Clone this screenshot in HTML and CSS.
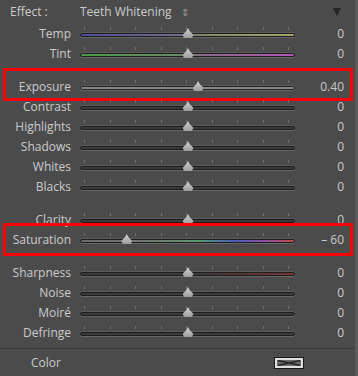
FILE: index.html
```html
<!DOCTYPE html>
<html lang="en">
<head>
  <meta charset="UTF-8">
  <meta name="viewport" content="width=device-width, initial-scale=1.0">
  <title>Local Adjustments</title>
  <link rel="stylesheet" href="styles.css">
</head>
<body>
  <div class="panel">
    <div class="header">
      <span class="effect-label">Effect :</span>
      <span class="effect-name">Teeth Whitening</span>
      <span class="updown">&#8661;</span>
      <span class="collapse"></span>
    </div>

    <div class="group">
      <div class="row">
        <span class="label">Temp</span>
        <div class="slider">
          <div class="ticks"><i></i><i></i><i></i><i></i><i></i><i></i><i></i><i></i><i></i></div>
          <div class="track temp"></div>
          <span class="thumb" style="left: 50%"></span>
        </div>
        <span class="value">0</span>
      </div>
      <div class="row">
        <span class="label">Tint</span>
        <div class="slider">
          <div class="ticks"><i></i><i></i><i></i><i></i><i></i><i></i><i></i><i></i><i></i></div>
          <div class="track tint"></div>
          <span class="thumb" style="left: 50%"></span>
        </div>
        <span class="value">0</span>
      </div>
    </div>

    <div class="group">
      <div class="row hl hl-exposure">
        <span class="label">Exposure</span>
        <div class="slider">
          <div class="ticks"><i></i><i></i><i></i><i></i><i></i><i></i><i></i><i></i><i></i></div>
          <div class="track light"></div>
          <span class="thumb" style="left: 54.7%"></span>
        </div>
        <span class="value">0.40</span>
      </div>
      <div class="row">
        <span class="label">Contrast</span>
        <div class="slider">
          <div class="ticks"><i></i><i></i><i></i><i></i><i></i><i></i><i></i><i></i><i></i></div>
          <div class="track"></div>
          <span class="thumb" style="left: 50%"></span>
        </div>
        <span class="value">0</span>
      </div>
      <div class="row">
        <span class="label">Highlights</span>
        <div class="slider">
          <div class="ticks"><i></i><i></i><i></i><i></i><i></i><i></i><i></i><i></i><i></i></div>
          <div class="track"></div>
          <span class="thumb" style="left: 50%"></span>
        </div>
        <span class="value">0</span>
      </div>
      <div class="row">
        <span class="label">Shadows</span>
        <div class="slider">
          <div class="ticks"><i></i><i></i><i></i><i></i><i></i><i></i><i></i><i></i><i></i></div>
          <div class="track"></div>
          <span class="thumb" style="left: 50%"></span>
        </div>
        <span class="value">0</span>
      </div>
      <div class="row">
        <span class="label">Whites</span>
        <div class="slider">
          <div class="ticks"><i></i><i></i><i></i><i></i><i></i><i></i><i></i><i></i><i></i></div>
          <div class="track"></div>
          <span class="thumb" style="left: 50%"></span>
        </div>
        <span class="value">0</span>
      </div>
      <div class="row">
        <span class="label">Blacks</span>
        <div class="slider">
          <div class="ticks"><i></i><i></i><i></i><i></i><i></i><i></i><i></i><i></i><i></i></div>
          <div class="track"></div>
          <span class="thumb" style="left: 50%"></span>
        </div>
        <span class="value">0</span>
      </div>
    </div>

    <div class="group">
      <div class="row">
        <span class="label">Clarity</span>
        <div class="slider">
          <div class="ticks"><i></i><i></i><i></i><i></i><i></i><i></i><i></i><i></i><i></i></div>
          <div class="track"></div>
          <span class="thumb" style="left: 50%"></span>
        </div>
        <span class="value">0</span>
      </div>
      <div class="row hl hl-saturation">
        <span class="label">Saturation</span>
        <div class="slider">
          <div class="ticks"><i></i><i></i><i></i><i></i><i></i><i></i><i></i><i></i><i></i></div>
          <div class="track saturation"></div>
          <span class="thumb" style="left: 21.5%"></span>
        </div>
        <span class="value">&ndash; 60</span>
      </div>
    </div>

    <div class="group">
      <div class="row">
        <span class="label">Sharpness</span>
        <div class="slider">
          <div class="ticks"><i></i><i></i><i></i><i></i><i></i><i></i><i></i><i></i><i></i></div>
          <div class="track sharpness"></div>
          <span class="thumb" style="left: 50%"></span>
        </div>
        <span class="value">0</span>
      </div>
      <div class="row">
        <span class="label">Noise</span>
        <div class="slider">
          <div class="ticks"><i></i><i></i><i></i><i></i><i></i><i></i><i></i><i></i><i></i></div>
          <div class="track"></div>
          <span class="thumb" style="left: 50%"></span>
        </div>
        <span class="value">0</span>
      </div>
      <div class="row">
        <span class="label">Moiré</span>
        <div class="slider">
          <div class="ticks"><i></i><i></i><i></i><i></i><i></i><i></i><i></i><i></i><i></i></div>
          <div class="track"></div>
          <span class="thumb" style="left: 50%"></span>
        </div>
        <span class="value">0</span>
      </div>
      <div class="row">
        <span class="label">Defringe</span>
        <div class="slider">
          <div class="ticks"><i></i><i></i><i></i><i></i><i></i><i></i><i></i><i></i><i></i></div>
          <div class="track"></div>
          <span class="thumb" style="left: 50%"></span>
        </div>
        <span class="value">0</span>
      </div>
    </div>

    <div class="color-row">
      <span class="color-label">Color</span>
      <span class="swatch">
        <svg width="24" height="6" viewBox="0 0 24 6">
          <path d="M1 0.5 L23 5.5 M1 5.5 L23 0.5" stroke="#222" stroke-width="1.3" fill="none"/>
        </svg>
      </span>
    </div>
  </div>
</body>
</html>
```

FILE: styles.css
```css
/* Base */
body {
  margin: 0;
  background: #4b4b4b;
  font-family: "Open Sans", "Liberation Sans", sans-serif;
  font-size: 12px;
  color: #cbcbcb;
}

.panel {
  width: 358px;
  height: 376px;
  box-sizing: border-box;
  border-right: 3px solid #5a5a5a;
  background: #4b4b4b;
  overflow: hidden;
}

/* Header */
.header {
  height: 23px;
  display: flex;
  align-items: center;
  padding-left: 10px;
}

.effect-label {
  width: 70px;
}

.updown {
  font-size: 10px;
  margin-left: 9px;
  color: #9a9a9a;
}

.collapse {
  margin-left: auto;
  margin-right: 14px;
  width: 0;
  height: 0;
  border-left: 4px solid transparent;
  border-right: 4px solid transparent;
  border-top: 8px solid #262626;
}

/* Slider rows */
.group {
  margin-top: 13px;
}

.header + .group {
  margin-top: 0;
}

.row {
  height: 20px;
  display: flex;
  align-items: center;
}

.label {
  width: 71px;
  text-align: right;
  flex-shrink: 0;
}

.slider {
  position: relative;
  width: 215px;
  height: 20px;
  margin-left: 9px;
  flex-shrink: 0;
}

.ticks {
  display: flex;
  justify-content: space-between;
  width: 205px;
  margin-left: 4px;
  margin-top: 4px;
  height: 3px;
}

.ticks i {
  width: 1px;
  height: 3px;
  background: #6e6e6e;
}

.track {
  height: 2px;
  margin-top: 3px;
  border-radius: 3px;
  background: #3a3a3a;
  border: 1px solid #1e1e1e;
  box-shadow: 0 1px 0 #666, 0 -1px 0 #5a5a5a;
}

.track.light {
  background: #858585;
  border-color: #262626;
}

.track.temp {
  background: linear-gradient(to right, #4d4d98, #6e6e8a 45%, #8a8a6a 60%, #a4a46a);
}

.track.tint {
  background: linear-gradient(to right, #4a9a48, #6a8a66 45%, #8c6a8a 60%, #b257b4);
}

.track.saturation {
  background: linear-gradient(to right, #6a6a6a, #707a70 35%, #5a9a70 55%, #4a60b8 72%, #8a50a8 85%, #c24848);
}

.track.sharpness {
  background: linear-gradient(to right, #3a3a3a 55%, #5a3434 78%, #7a3434);
}

.thumb {
  position: absolute;
  top: 5px;
  width: 11px;
  height: 10px;
  margin-left: -5px;
  background: linear-gradient(#d4d4d4, #9c9c9c);
  clip-path: polygon(50% 0, 65% 30%, 100% 70%, 85% 100%, 15% 100%, 0 70%, 35% 30%);
}

.value {
  width: 49px;
  text-align: right;
  flex-shrink: 0;
}

/* Highlight boxes drawn over the rows */
.hl {
  position: relative;
}

.hl::after {
  content: '';
  position: absolute;
  left: 3px;
  right: 2px;
  border: 3px solid #f00;
  pointer-events: none;
}

.hl-exposure::after {
  top: -8px;
  bottom: -5px;
}

.hl-saturation::after {
  top: -6px;
  bottom: -7px;
}

/* Color row */
.color-row {
  margin-top: 6px;
  border-top: 1px solid #3e3e3e;
  height: 27px;
  display: flex;
  align-items: center;
}

.color-label {
  margin-left: 31px;
}

.swatch {
  display: flex;
  align-items: center;
  justify-content: center;
  margin-left: 214px;
  margin-top: 1px;
  width: 24px;
  height: 6px;
  background: #6a6a6a;
  border: 2px solid #e0e0e0;
  outline: 1px solid #1a1a1a;
}
```
